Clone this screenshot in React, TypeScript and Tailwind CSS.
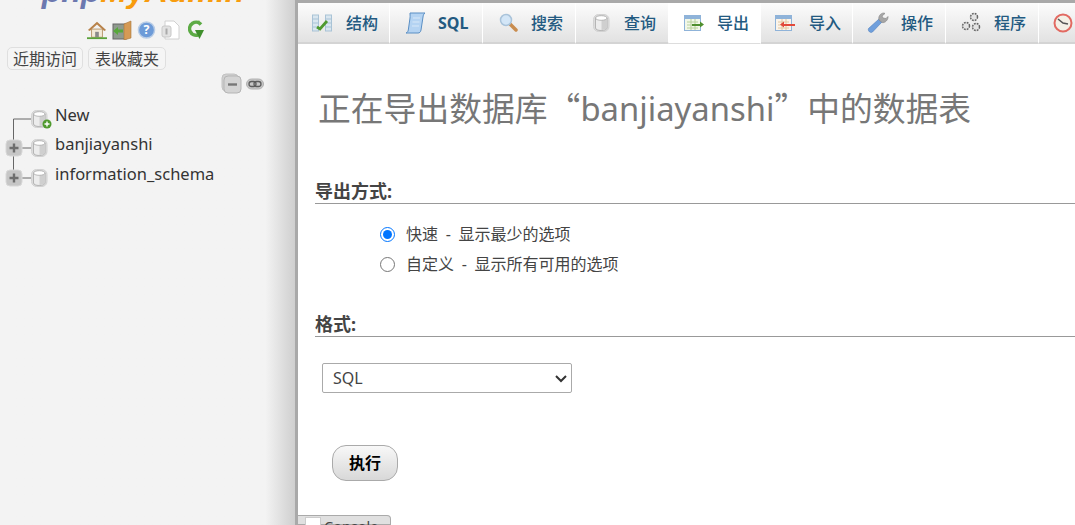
const FONT = 'font-["Noto_Sans","Noto_Sans_CJK_SC",sans-serif]';

function DbIcon({ size = 18 }: { size?: number }) {
  return (
    <svg width={size} height={size} viewBox="0 0 18 18">
      <rect x="0.500" y="0.500" width="15.500" height="17" rx="5" fill="#dcdcdc" stroke="#d2d2d2" />
      <path d="M2.500 4v10c0 1.500 2.600 2.500 5.700 2.500s5.800-1 5.800-2.500V4z" fill="#ececec" stroke="#a8a8a8" strokeWidth=".8" />
      <path d="M8.500 6v10c3 0 5.500-1 5.500-2.500V5z" fill="#cfcfcf" />
      <ellipse cx="8.250" cy="4" rx="5.750" ry="2.300" fill="#fff" stroke="#a8a8a8" strokeWidth=".8" />
    </svg>
  );
}

const tabIcons: Record<string, React.ReactNode> = {
  结构: (
    <svg width="20" height="18" viewBox="0 0 20 18">
      <rect x="0.500" y="1" width="6" height="16" fill="#d9e6ef" stroke="#a9c3d6" />
      <rect x="13.500" y="1" width="6" height="16" fill="#d9e6ef" stroke="#a9c3d6" />
      <path d="M1 5h5M14 5h5M1 9h5M14 9h5M1 13h5M14 13h5" stroke="#a9c3d6" />
      <path d="M5 13l3 2 7-8" fill="none" stroke="#4f9a2e" strokeWidth="2.800" />
    </svg>
  ),
  SQL: (
    <svg width="21" height="22" viewBox="0 0 21 22">
      <path d="M5 1h15c-1.500 1-1.800 2.500-2 4l-2 13c-.3 2-1.500 3-3 3H1c1.500-.6 2-1.500 2.300-3L5 6c.2-2 0-4 0-5z" fill="#b4d3f2" stroke="#5a8fc4" />
      <path d="M8 6h7M7.500 10h7M7 14h7" stroke="#d8e8f8" />
    </svg>
  ),
  搜索: (
    <svg width="19" height="19" viewBox="0 0 19 19">
      <path d="M11 11l6 6" stroke="#c98c4e" strokeWidth="3.500" strokeLinecap="round" />
      <circle cx="7" cy="7" r="5.500" fill="#d3e6f7" stroke="#a9c3da" strokeWidth="1.500" />
    </svg>
  ),
  查询: <DbIcon size={18} />,
  导出: (
    <svg width="20" height="16" viewBox="0 0 20 16">
      <rect x="0.500" y="0.500" width="16" height="15" fill="#f2f7e8" stroke="#8fb3d9" />
      <rect x="0.500" y="0.500" width="16" height="3.500" fill="#8fb3d9" />
      <path d="M3 7h11M3 10h11M3 13h11M7 4v11M11 4v11" stroke="#b7d09a" />
      <path d="M8 9h8V6.500l4 3-4 3V11H8z" fill="#4f8f2e" />
    </svg>
  ),
  导入: (
    <svg width="20" height="16" viewBox="0 0 20 16">
      <rect x="0.500" y="0.500" width="16" height="15" fill="#fbf4ea" stroke="#8fb3d9" />
      <rect x="0.500" y="0.500" width="16" height="3.500" fill="#8fb3d9" />
      <path d="M3 7h11M3 10h11M3 13h11M7 4v11M11 4v11" stroke="#e2c7a0" />
      <path d="M20 9H9V6.500l-4 3 4 3V11h11z" fill="#e24a3b" />
    </svg>
  ),
  操作: (
    <svg width="22" height="22" viewBox="0 0 22 22">
      <path d="M1.500 16.500L12 7l3 3-9.500 10c-2 1.500-5-1-4-3.500z" fill="#6f9fdc" stroke="#4f7fbd" strokeWidth=".6" />
      <path d="M12 8c-1-3 1-7 5-7l1 .5-3 2.500 1 2 3 .5 2-2c.5 3-3 7-6 6z" fill="#a6a6a6" stroke="#858585" strokeWidth=".6" />
    </svg>
  ),
  程序: (
    <svg width="21" height="21" viewBox="0 0 21 21" fill="#e4e4e4" stroke="#666" strokeWidth="1.500">
      <circle cx="13" cy="5" r="3.500" strokeDasharray="1.800 1" />
      <circle cx="5" cy="14" r="3.500" strokeDasharray="1.800 1" />
      <circle cx="15" cy="15" r="3.500" strokeDasharray="1.800 1" />
    </svg>
  ),
  事件: (
    <svg width="20" height="20" viewBox="0 0 20 20">
      <circle cx="10" cy="10" r="8.500" fill="#f4f0e6" stroke="#e26a62" strokeWidth="2" />
      <path d="M5 6l5 4 5 1" fill="none" stroke="#555" strokeWidth="1.600" />
    </svg>
  ),
};

const tabs = [
  { label: '结构', width: 'w-[92px]', pad: 'pl-[14px]' },
  { label: 'SQL', width: 'w-[93px]', pad: 'pl-[15px]' },
  { label: '搜索', width: 'w-[93px]', pad: 'pl-[16px]' },
  { label: '查询', width: 'w-[93px]', pad: 'pl-[17px]' },
  { label: '导出', width: 'w-[92px]', pad: 'pl-[15px]' },
  { label: '导入', width: 'w-[92px]', pad: 'pl-[14px]' },
  { label: '操作', width: 'w-[93px]', pad: 'pl-[14px]' },
  { label: '程序', width: 'w-[93px]', pad: 'pl-[15px]' },
  { label: '事件', width: 'w-[93px]', pad: 'pl-[14px]' },
];

function Tab({ label, width, pad }: { label: string; width: string; pad: string }) {
  const active = label === '导出';
  return (
    <div
      className={`relative shrink-0 border-r border-white ${width} ${
        active ? 'h-[41px] border-b border-b-[#dddddd] bg-white' : 'h-[41px] bg-linear-to-b from-[#fcfcfc] to-[#e2e2e2] border-b-2 border-b-[#d4d4d4]'
      }`}
    >
      <span className={`flex h-full items-center ${pad}`}>{tabIcons[label]}</span>
      <span className="absolute left-[48px] top-[12px] whitespace-nowrap text-[16px] font-medium leading-none text-[#235a81]">
        {label === 'SQL' ? <b>SQL</b> : label}
      </span>
    </div>
  );
}

function TreeRow({ name, first, last }: { name: string; first?: boolean; last?: boolean }) {
  return (
    <div className="flex h-[29.5px] items-center">
      <svg width="31" height="30" viewBox="0 0 31 30" className="shrink-0 translate-y-[3px]">
        {first ? (
          <path d="M13.500 15H31M13.500 15v15" stroke="#666" fill="none" />
        ) : (
          <>
            <path d={last ? 'M13.500 0v8M22 15h9' : 'M13.500 0v30M22 15h9'} stroke="#666" fill="none" />
            <rect x="6" y="7" width="16" height="16" rx="4" fill="#c6c6c6" stroke="#d8d8d8" />
            <path d="M9.500 15h9M14 10.500v9" stroke="#6e6e6e" strokeWidth="2.400" />
          </>
        )}
      </svg>
      <span className="relative shrink-0 translate-y-[3px]">
        <DbIcon />
        {first && (
          <svg width="10" height="10" viewBox="0 0 10 10" className="absolute bottom-[-1px] right-[-3px]">
            <circle cx="5" cy="5" r="4.500" fill="#4f9a2e" />
            <path d="M2.500 5h5M5 2.500v5" stroke="#fff" strokeWidth="1.400" />
          </svg>
        )}
      </span>
      <span className="ml-[6px] -translate-y-[1px] text-[16.5px] leading-none text-[#333]">{name}</span>
    </div>
  );
}

function Sidebar() {
  return (
    <aside className="relative flex h-[525px] w-[295px] shrink-0 flex-col bg-linear-to-r from-[#f3f3f3] from-[90%] to-[#cfcfcf]">
      <div className="flex h-[10px] justify-center overflow-hidden pr-[9px]">
        <div className="-mt-[25px] text-[32px] font-bold italic leading-none whitespace-nowrap font-['Liberation_Sans',sans-serif]">
          <span className="text-[#6c78af]">php</span>
          <span className="text-[#f89c0e]">MyAdmin</span>
        </div>
      </div>
      <div className="mt-[9px] flex h-[21px] items-center gap-[5px] pl-[87px]">
        <svg width="20" height="20" viewBox="0 0 22 20">
          <path d="M5 9h12v9H5z" fill="#f3ead8" stroke="#b59468" />
          <path d="M9 18v-6h4v6z" fill="#8a8a8a" />
          <path d="M1 10L11 1l10 9-2 1-8-7-8 7z" fill="#b8824a" />
          <path d="M0 19h22" stroke="#5aa23a" strokeWidth="2" />
        </svg>
        <svg width="20" height="20" viewBox="0 0 20 20">
          <rect x="1" y="4" width="13" height="15" fill="#8f9a8f" stroke="#666" />
          <path d="M12 4l7-3v17l-7 2z" fill="#d59a55" stroke="#a8753a" strokeWidth=".6" />
          <path d="M1 11l5-4v2.500h5v3H6V15z" fill="#57a83b" />
        </svg>
        <svg width="19" height="20" viewBox="0 0 20 20">
          <circle cx="10" cy="10" r="8.500" fill="#6d9bd8" stroke="#b9cde6" strokeWidth="1.500" />
          <text x="10" y="14.500" fontSize="13" fontWeight="700" fill="#fff" textAnchor="middle">?</text>
        </svg>
        <svg width="20" height="20" viewBox="0 0 20 20">
          <path d="M4 1h9l5 5v13H4z" fill="#fff" stroke="#d0d0d0" />
          <rect x="1" y="6" width="9" height="11" rx="2" fill="#e2e2e2" stroke="#c8c8c8" />
          <path d="M5.500 8.500v6" stroke="#aaa" strokeWidth="2" />
        </svg>
        <svg width="17" height="20" viewBox="0 0 17 20" className="ml-[2px]">
          <path d="M13 4.500A6.500 6.500 0 1 0 10 15" fill="none" stroke="#5cab45" strokeWidth="3.500" />
          <path d="M7 10h9l-4.500 9z" fill="#3f8f2c" />
          <path d="M13 4.500L9 3l2-3z" fill="#5cab45" />
        </svg>
      </div>
      <div className={`mt-[7px] flex gap-[5px] pl-[7px] ${FONT}`}>
        <span className="flex h-[23px] w-[76px] items-center justify-center rounded-[5px] border border-[#dfdfdf] bg-[#f5f5f5] text-[16px] text-[#444]">近期访问</span>
        <span className="flex h-[23px] w-[78px] items-center justify-center rounded-[5px] border border-[#dfdfdf] bg-[#f5f5f5] text-[16px] text-[#444]">表收藏夹</span>
      </div>
      <div className="mt-[2px] flex h-[24px] items-center justify-end gap-[3px] pr-[31px]">
        <svg width="22" height="22" viewBox="0 0 22 22">
          <rect x="1" y="1" width="16" height="17" rx="4" fill="#d0d0d0" stroke="#c2c2c2" />
          <rect x="3" y="3" width="17" height="17" rx="4" fill="#d4d4d4" stroke="#b5b5b5" />
          <path d="M7 11.500h9" stroke="#777" strokeWidth="2.400" />
        </svg>
        <svg width="18" height="12" viewBox="0 0 18 12">
          <rect x="0.500" y="1" width="17" height="10" rx="5" fill="#c6c6c6" stroke="#b0b0b0" />
          <rect x="3" y="3.500" width="7" height="5" rx="2.500" fill="none" stroke="#5c5c5c" strokeWidth="1.300" />
          <rect x="8" y="3.500" width="7" height="5" rx="2.500" fill="none" stroke="#5c5c5c" strokeWidth="1.300" />
        </svg>
      </div>
      <div className={`mt-[5px] ${FONT}`}>
        <TreeRow name="New" first />
        <TreeRow name="banjiayanshi" />
        <TreeRow name="information_schema" last />
      </div>
    </aside>
  );
}

function SectionHeading({ children }: { children: string }) {
  return <h3 className="ml-[17px] border-b border-[#999] pb-[1px] text-[18px] font-bold leading-[22px] text-[#444]">{children}</h3>;
}

function Radio({ checked, label }: { checked?: boolean; label: string }) {
  return (
    <label className="flex h-[30px] items-center pl-[82px] text-[16px] text-[#444]">
      <input type="radio" name="quick_or_custom" defaultChecked={checked} className="m-0 h-[15px] w-[15px] accent-[#0075ff]" />
      <span className="ml-[11px] [word-spacing:3.500px]">{label}</span>
    </label>
  );
}

export default function App() {
  return (
    <div className={`flex h-[525px] w-[1075px] overflow-hidden bg-white ${FONT}`}>
      <Sidebar />
      <main className="relative h-[525px] min-w-0 flex-1 overflow-hidden border-l-[3px] border-[#a9a9a9]">
        <div className="h-[3px] bg-[#a9a9a9]" />
        <nav className="flex">
          {tabs.map((t) => (
            <Tab key={t.label} {...t} />
          ))}
        </nav>
        <h2 className="ml-[20px] mt-[41px] text-[32.8px] font-normal leading-[44px] whitespace-nowrap text-[#777]">
          正在导出数据库<span className="font-['Noto_Sans_CJK_SC']">“</span>banjiayanshi<span className="font-['Noto_Sans_CJK_SC']">”</span>中的数据表
        </h2>
        <div className="mt-[49px]">
          <SectionHeading>导出方式:</SectionHeading>
        </div>
        <div className="mt-[15px]">
          <Radio checked label="快速 - 显示最少的选项" />
          <Radio label="自定义 - 显示所有可用的选项" />
        </div>
        <div className="mt-[34px]">
          <SectionHeading>格式:</SectionHeading>
        </div>
        <div className="relative ml-[24px] mt-[26px] w-[250px]">
          <select className="block h-[30px] w-full appearance-none rounded-[2px] border border-[#aaa] bg-white pl-[10px] text-[16px] text-[#444]">
            <option>SQL</option>
          </select>
          <svg width="12" height="8" viewBox="0 0 12 8" className="pointer-events-none absolute right-[5px] top-[12px]">
            <path d="M1 1l5 5 5-5" fill="none" stroke="#333" strokeWidth="2" />
          </svg>
        </div>
        <button className="ml-[34px] mt-[52px] block h-[36px] w-[66px] rounded-[14px] border border-[#aaa] bg-linear-to-b from-[#f8f8f8] to-[#d8d8d8] text-[16px] font-bold text-black">
          执行
        </button>
        <div className="absolute bottom-0 left-0 flex h-[10px] w-[93px] items-start rounded-tr-[4px] border border-[#aaa] border-l-0 bg-[#e0e0e0] pl-[7px] pt-[1px]">
          <span className="h-[14px] w-[16px] shrink-0 border border-[#ccc] bg-white" />
          <span className="ml-[3px] mt-[2px] text-[14.5px] leading-[14px] text-[#444]">Console</span>
        </div>
      </main>
    </div>
  );
}
